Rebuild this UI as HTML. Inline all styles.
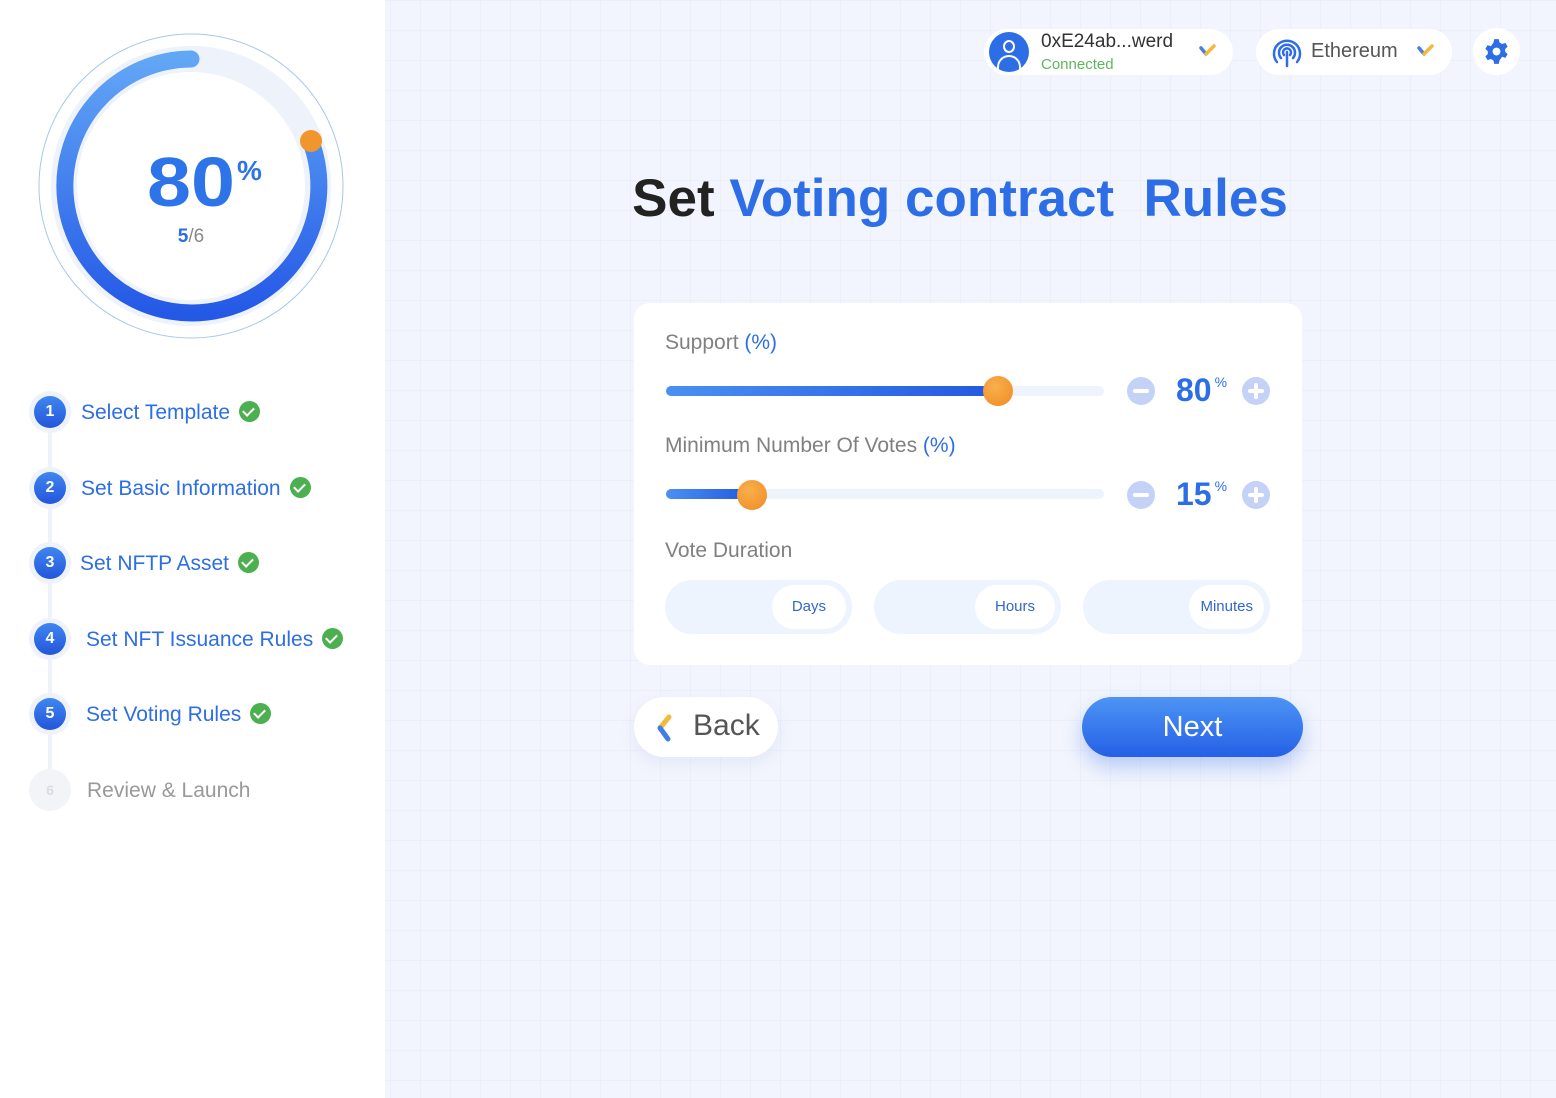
<!DOCTYPE html>
<html><head><meta charset="utf-8"><style>
*{margin:0;padding:0;box-sizing:border-box}
body{width:1556px;height:1098px;overflow:hidden;position:relative;font-family:"Liberation Sans","DejaVu Sans",sans-serif;
background-color:#f2f5fd;
background-image:linear-gradient(rgba(200,210,235,.15) 1px,transparent 1px),linear-gradient(90deg,rgba(200,210,235,.15) 1px,transparent 1px);
background-size:30px 30px}
.a{position:absolute}
.side{left:0;top:0;width:385px;height:1098px;background:#fff}
.step{position:absolute;left:29px;width:42px;height:42px;border-radius:50%;background:#eef2fb}
.step b{position:absolute;left:5px;top:5px;width:32px;height:32px;border-radius:50%;background:linear-gradient(#3f86f0,#2456db);color:#fff;font-size:16px;text-align:center;line-height:32px}
.lbl{position:absolute;font-size:21px;color:#2d6ee6;white-space:nowrap}
.ok{display:inline-block;width:21px;height:21px;border-radius:50%;background:#4caf50;vertical-align:-3px;margin-left:9px;position:relative}
.ok:after{content:"";position:absolute;left:6px;top:4px;width:5px;height:9px;border:solid #fff;border-width:0 2.5px 2.5px 0;transform:rotate(45deg)}
.pill{background:#fff;border-radius:24px}
.card{left:634px;top:303px;width:668px;height:362px;background:#fff;border-radius:16px}
.flab{font-size:21px;color:#808080}
.flab span{color:#2d6ee6}
.track{height:10px;border-radius:5px;background:#eef3fc}
.fill{height:10px;border-radius:5px;background:linear-gradient(90deg,#4a90f2,#2358e0)}
.knob{width:30px;height:30px;border-radius:50%;background:radial-gradient(circle at 40% 35%,#f9b04c,#ef8a22)}
.circ{width:28px;height:28px;border-radius:50%;background:#c3d2f6}
.circ:before{content:"";position:absolute;left:6px;top:12px;width:16px;height:4px;background:#fff;border-radius:2px}
.plus:after{content:"";position:absolute;left:12px;top:6px;width:4px;height:16px;background:#fff;border-radius:2px}
.val{font-size:32px;font-weight:bold;color:#2d6ee6}
.val sup{font-size:14px;font-weight:normal;vertical-align:14px;margin-left:3px}
.dur{width:187px;height:54px;border-radius:27px;background:#eef4fd}
.dur b{position:absolute;right:6px;top:5px;height:44px;border-radius:22px;background:#fff;color:#3366cc;font-weight:normal;font-size:15px;line-height:44px;padding:0 20px}
</style></head><body>
<div class="a side"></div>
<svg class="a" style="left:0;top:0" width="385" height="345">
<defs><linearGradient id="g" x1="0" y1="0" x2="0" y2="1"><stop offset="0" stop-color="#62a6f6"/><stop offset="1" stop-color="#2459e6"/></linearGradient></defs>
<circle cx="191" cy="186" r="152" fill="none" stroke="#a9c6ec" stroke-width="1"/>
<circle cx="191" cy="186" r="127" fill="none" stroke="#eef2fb" stroke-width="26"/>
<path d="M191 59 A127 127 0 1 0 311 142" fill="none" stroke="url(#g)" stroke-width="17" stroke-linecap="round"/>
<circle cx="311" cy="141" r="11" fill="#f0962c"/>
<text x="147" y="206" font-family="Liberation Sans" font-weight="bold" font-size="70" fill="#2d74e8" textLength="88" lengthAdjust="spacingAndGlyphs">80</text>
<text x="237" y="180" font-family="Liberation Sans" font-weight="bold" font-size="28" fill="#2d74e8">%</text>
<text x="191" y="242" text-anchor="middle" font-family="Liberation Sans" font-size="19" fill="#888"><tspan font-weight="bold" fill="#2d6ee6">5</tspan>/6</text>
</svg>
<div class="a" style="left:48px;top:420px;width:4px;height:360px;background:#eef2fb"></div>
<div class="step" style="top:391px"><b>1</b></div><div class="lbl" style="left:81px;top:401px">Select Template<i class="ok"></i></div>
<div class="step" style="top:467px"><b>2</b></div><div class="lbl" style="left:81px;top:477px">Set Basic Information<i class="ok"></i></div>
<div class="step" style="top:542px"><b>3</b></div><div class="lbl" style="left:80px;top:552px">Set NFTP Asset<i class="ok"></i></div>
<div class="step" style="top:618px"><b>4</b></div><div class="lbl" style="left:86px;top:628px">Set NFT Issuance Rules<i class="ok"></i></div>
<div class="step" style="top:693px"><b>5</b></div><div class="lbl" style="left:86px;top:703px">Set Voting Rules<i class="ok"></i></div>
<div class="step" style="top:769px;background:#f2f4f8"><b style="background:none;color:#d8dce4;font-size:14px">6</b></div><div class="lbl" style="left:87px;top:779px;color:#999">Review &amp; Launch</div>

<div class="a pill" style="left:984px;top:29px;width:249px;height:46px"></div>
<div class="a" style="left:989px;top:32px;width:40px;height:40px;border-radius:50%;background:#2d6ee6;overflow:hidden">
<div class="a" style="left:14px;top:8px;width:12px;height:13px;border-radius:50%;border:2.5px solid #fff"></div>
<div class="a" style="left:8px;top:23px;width:24px;height:16px;border-radius:12px 12px 0 0;border:2.5px solid #fff;border-bottom:none"></div></div>
<div class="a" style="left:1041px;top:31px;font-size:19px;color:#333">0xE24ab...werd</div>
<div class="a" style="left:1041px;top:56px;font-size:15px;color:#5cb85c">Connected</div>
<svg class="a" style="left:1198px;top:43px" width="20" height="16"><path d="M3 5 L8 11" stroke="#4a7ee0" stroke-width="3.5" stroke-linecap="round"/><path d="M8 11 L16 3" stroke="#f2b93b" stroke-width="3.5" stroke-linecap="round"/></svg>
<div class="a pill" style="left:1256px;top:29px;width:196px;height:46px"></div>
<svg class="a" style="left:1272px;top:38px" width="30" height="30" fill="none" stroke="#2d6ee6" stroke-width="2.5" stroke-linecap="round"><path d="M9 20 A8 8 0 1 1 21 20"/><path d="M5 24 A13 13 0 1 1 25 24"/><path d="M12 17 A4 4 0 1 1 18 17"/><path d="M15 14 V28"/></svg>
<div class="a" style="left:1311px;top:40px;font-size:20px;color:#555">Ethereum</div>
<svg class="a" style="left:1416px;top:43px" width="20" height="16"><path d="M3 5 L8 11" stroke="#4a7ee0" stroke-width="3.5" stroke-linecap="round"/><path d="M8 11 L16 3" stroke="#f2b93b" stroke-width="3.5" stroke-linecap="round"/></svg>
<div class="a pill" style="left:1473px;top:28px;width:47px;height:47px;border-radius:50%"></div>
<svg class="a" style="left:1483px;top:38px" width="27" height="27" viewBox="0 0 24 24"><path fill="#2d6ee6" d="M10 1h4l.7 3 2.3 1.3 2.9-1 2 3.4-2.2 2.1v2.4l2.2 2.1-2 3.4-2.9-1L14.7 20 14 23h-4l-.7-3L7 18.7l-2.9 1-2-3.4 2.2-2.1v-2.4L2.1 9.7l2-3.4 2.9 1L9.3 4z"/><circle cx="12" cy="12" r="3.5" fill="#fff"/></svg>

<div class="a" style="left:0;top:168px;width:1556px;padding-left:364px;text-align:center;font-size:53px;font-weight:bold;color:#2d6ee6;white-space:pre"><span style="color:#222">Set</span> Voting contract  Rules</div>

<div class="a card"></div>
<div class="a flab" style="left:665px;top:331px">Support <span>(%)</span></div>
<div class="a track" style="left:666px;top:386px;width:438px"></div>
<div class="a fill" style="left:666px;top:386px;width:330px"></div>
<div class="a knob" style="left:983px;top:376px"></div>
<div class="a circ" style="left:1127px;top:377px"></div>
<div class="a val" style="left:1176px;top:372px">80<sup>%</sup></div>
<div class="a circ plus" style="left:1242px;top:377px"></div>

<div class="a flab" style="left:665px;top:434px">Minimum Number Of Votes <span>(%)</span></div>
<div class="a track" style="left:666px;top:489px;width:438px"></div>
<div class="a fill" style="left:666px;top:489px;width:86px"></div>
<div class="a knob" style="left:737px;top:480px"></div>
<div class="a circ" style="left:1127px;top:481px"></div>
<div class="a val" style="left:1176px;top:476px">15<sup>%</sup></div>
<div class="a circ plus" style="left:1242px;top:481px"></div>

<div class="a flab" style="left:665px;top:539px">Vote Duration</div>
<div class="a dur" style="left:665px;top:580px"><b>Days</b></div>
<div class="a dur" style="left:874px;top:580px"><b>Hours</b></div>
<div class="a dur" style="left:1083px;top:580px"><b style="padding:0 11px">Minutes</b></div>

<div class="a pill" style="left:634px;top:697px;width:144px;height:60px;border-radius:30px;box-shadow:0 6px 16px rgba(120,140,200,.12)"></div>
<svg class="a" style="left:652px;top:711px" width="24" height="34"><path d="M17 6 L8 17" stroke="#f2bb3c" stroke-width="5" stroke-linecap="round"/><path d="M8 17 L16 28" stroke="#3f7ee6" stroke-width="5" stroke-linecap="round"/></svg>
<div class="a" style="left:693px;top:709px;font-size:30px;color:#555">Back</div>
<div class="a" style="left:1082px;top:697px;width:221px;height:60px;border-radius:30px;background:linear-gradient(#4d94f4,#2560e6);box-shadow:0 10px 20px rgba(50,100,230,.3);color:#fff;font-size:29px;text-align:center;line-height:60px">Next</div>
</body></html>
